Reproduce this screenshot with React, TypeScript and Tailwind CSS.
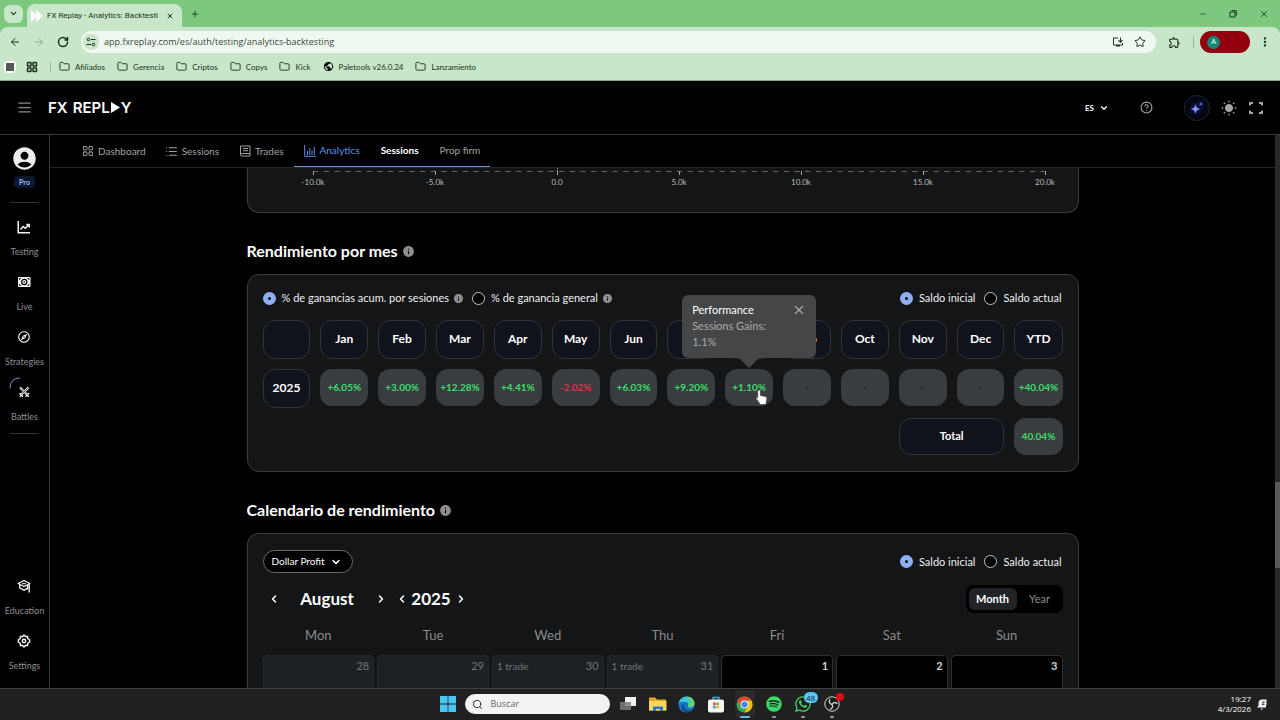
import React from 'react';
import {
  AlignJustify,
  ArrowLeft,
  ArrowRight,
  ChevronDown,
  ChevronLeft,
  ChevronRight,
  CircleHelp,
  Folder,
  LayoutGrid,
  List,
  Minus,
  Plus,
  RotateCw,
  Search,
  Star,
  X,
} from 'lucide-react';
import { FaSpotify, FaWhatsapp } from 'react-icons/fa';
import {
  MdAccountCircle,
  MdInfo,
  MdMoreVert,
  MdOutlineExplore,
  MdOutlineExtension,
  MdOutlineInstallDesktop,
  MdPublic,
} from 'react-icons/md';

const bookmarks = ['Afiliados', 'Gerencia', 'Criptos', 'Copys', 'Kick', 'Paletools v26.0.24', 'Lanzamiento'];

const months = ['Jan', 'Feb', 'Mar', 'Apr', 'May', 'Jun', 'Jul', 'Aug', 'Sep', 'Oct', 'Nov', 'Dec', 'YTD'];

const gains = [
  '+6.05%',
  '+3.00%',
  '+12.28%',
  '+4.41%',
  '-2.02%',
  '+6.03%',
  '+9.20%',
  '+1.10%',
  '-',
  '-',
  '-',
  '-',
  '+40.04%',
];

const axis = ['-10.0k', '-5.0k', '0.0', '5.0k', '10.0k', '15.0k', '20.0k'];

const weekdays = ['Mon', 'Tue', 'Wed', 'Thu', 'Fri', 'Sat', 'Sun'];

const days = [
  { day: 28, trades: '', current: false },
  { day: 29, trades: '', current: false },
  { day: 30, trades: '1 trade', current: false },
  { day: 31, trades: '1 trade', current: false },
  { day: 1, trades: '', current: true },
  { day: 2, trades: '', current: true },
  { day: 3, trades: '', current: true },
];

const gainColor = (value: string) => {
  if (value === '-') return 'text-[#17191a]';
  return value.startsWith('-') ? 'text-[#e0304e]' : 'text-[#3ddc6b]';
};

const BrowserBar = () => (
  <header className="flex-none bg-[#7dc87f] text-[#1c3320] font-['Roboto',sans-serif]">
    <div className="flex h-[27px] items-center pl-1">
      <button aria-label="Buscar pestañas" className="flex h-[18px] w-[19px] items-center justify-center rounded-md bg-[#c8e6c9]">
        <ChevronDown size={9} strokeWidth={3} />
      </button>
      <div className="ml-1 flex h-[23px] w-[155px] items-center gap-1 self-end rounded-t-lg bg-[#c8e6c9] pl-1 pr-1">
        <svg width="12" height="12" viewBox="0 0 12 12" fill="#fff">
          <path d="M0 0l6 6-6 6zM5 0l7 6-7 6z" />
        </svg>
        <span className="flex-1 overflow-hidden whitespace-nowrap text-[8px]">FX Replay - Analytics: Backtesting</span>
        <button aria-label="Cerrar pestaña" className="px-1">
          <X size={8} strokeWidth={3} />
        </button>
      </div>
      <button aria-label="Nueva pestaña" className="ml-2">
        <Plus size={10} strokeWidth={2} />
      </button>
      <div className="ml-auto flex items-center gap-[22px] pr-[11px]">
        <button aria-label="Minimizar">
          <Minus size={8} strokeWidth={2} />
        </button>
        <button aria-label="Restaurar">
          <svg width="8" height="8" viewBox="0 0 8 8" fill="none" stroke="currentColor">
            <path d="M1 2h5v5H1zM2.500.700h4.800v4.800" />
          </svg>
        </button>
        <button aria-label="Cerrar">
          <X size={10} strokeWidth={2} />
        </button>
      </div>
    </div>
    <div className="rounded-t-lg border-b border-[#8aa88c] bg-[#c8e6c9]">
      <div className="flex h-[30px] items-center pl-[9px] pr-2">
        <button aria-label="Atrás">
          <ArrowLeft size={12} strokeWidth={2} />
        </button>
        <button aria-label="Adelante" className="ml-3 text-[#86a888]">
          <ArrowRight size={12} strokeWidth={2} />
        </button>
        <button aria-label="Recargar" className="ml-3">
          <RotateCw size={12} strokeWidth={3} />
        </button>
        <div className="ml-3 flex h-[22px] flex-1 items-center rounded-full bg-[#eff8f0] pl-[2px] pr-[10px]">
          <span className="flex h-4 w-4 items-center justify-center rounded-full bg-[#c8e6c9]">
            <svg width="10" height="10" viewBox="0 0 10 10" fill="none" stroke="currentColor">
              <circle cx="2.500" cy="2.500" r="1.300" />
              <path d="M5 2.500h4.500M.500 7.500H5" />
              <circle cx="7.500" cy="7.500" r="1.300" />
            </svg>
          </span>
          <input
            aria-label="Dirección"
            className="ml-[5px] flex-1 bg-transparent font-['Open_Sans',sans-serif] text-[9px] text-[#38483a] outline-none"
            defaultValue="app.fxreplay.com/es/auth/testing/analytics-backtesting"
          />
          <MdOutlineInstallDesktop size={12} />
          <Star size={12} strokeWidth={2} className="ml-[10px]" />
        </div>
        <button aria-label="Extensiones" className="ml-3">
          <MdOutlineExtension size={13} />
        </button>
        <span className="ml-3 h-3 w-px bg-[#8fbf92]" />
        <button className="ml-[6px] flex h-[22px] w-[50px] items-center rounded-full bg-[#94000f] pl-[7px]">
          <span className="flex h-[13px] w-[13px] items-center justify-center rounded-full bg-[#128a76] text-[8px] text-white">A</span>
        </button>
        <button aria-label="Menú" className="ml-2">
          <MdMoreVert size={14} />
        </button>
      </div>
      <nav className="flex h-[23px] items-center gap-3 pb-1 pl-1 font-['Lato',sans-serif] text-[8px]">
        <span className="flex h-3 w-3 items-center justify-center rounded-sm bg-white">
          <span className="h-2 w-2 bg-[#55585b]" />
        </span>
        <LayoutGrid size={12} strokeWidth={3} className="-ml-[2px]" />
        <span className="h-[10px] w-px bg-[#8fbf92]" />
        {bookmarks.map((name) => (
          <a key={name} href="#" className="flex items-center gap-[5px] whitespace-nowrap first-of-type:-ml-1">
            {name.startsWith('Paletools') ? (
              <MdPublic size={11} className="text-black" />
            ) : (
              <Folder size={11} strokeWidth={2} />
            )}
            {name}
          </a>
        ))}
      </nav>
    </div>
  </header>
);

const AppHeader = () => (
  <header className="flex h-[54px] flex-none items-center border-b border-[#3a3a3a] pl-[17px] pr-4">
    <button aria-label="Abrir menú" className="text-[#8b8b8b]">
      <AlignJustify size={15} strokeWidth={2} />
    </button>
    <a
      href="#"
      aria-label="FX Replay"
      className="ml-4 flex items-center gap-px font-['Inter',sans-serif] text-[15px] font-semibold leading-4 text-white"
    >
      <span className="mr-1">FX</span>
      <span>REPL</span>
      <svg width="9" height="11" viewBox="0 0 9 11" fill="currentColor">
        <path d="M0 0l9 5.500L0 11z" />
      </svg>
      <span>Y</span>
    </a>
    <div className="ml-auto flex items-center text-[#a5a5a5]">
      <button className="flex items-center gap-[5px] text-[8px] font-bold text-white">
        ES
        <ChevronDown size={10} strokeWidth={3} />
      </button>
      <button aria-label="Ayuda" className="ml-[31px]">
        <CircleHelp size={13} strokeWidth={2} />
      </button>
      <button
        aria-label="Asistente"
        className="ml-[31px] flex h-[26px] w-[26px] items-center justify-center rounded-full border border-[#22252f] bg-[#05060f]"
      >
        <svg width="16" height="16" viewBox="0 0 16 16" className="drop-shadow-[0_0_3px_#2b46ff]">
          <path d="M6.500 4c.8 3.600 1.600 4.300 5 5-3.400.8-4.200 1.500-5 5-.8-3.500-1.600-4.200-5-5 3.400-.7 4.200-1.400 5-5z" fill="#7f9dff" />
          <path d="M12 1.500c.4 1.800.8 2.200 2.500 2.500-1.700.4-2.100.8-2.500 2.500-.4-1.700-.8-2.100-2.500-2.500 1.700-.3 2.100-.7 2.500-2.500z" fill="#4f62dc" />
        </svg>
      </button>
      <button aria-label="Tema" className="ml-[11px]">
        <svg width="16" height="16" viewBox="0 0 16 16" fill="currentColor" stroke="currentColor" strokeLinecap="round">
          <circle cx="8" cy="8" r="3.600" />
          <path
            strokeWidth="1.400"
            d="M8 1.200v.6M8 14.200v.6M1.200 8h.6M14.200 8h.6M3.200 3.200l.4.4M12.400 12.400l.4.4M3.200 12.800l.4-.4M12.400 3.600l.4-.4"
          />
        </svg>
      </button>
      <button aria-label="Pantalla completa" className="ml-[11px]">
        <svg width="16" height="16" viewBox="0 0 16 16" fill="none" stroke="currentColor" strokeWidth="2">
          <path d="M2 5.500V3h3M11 3h3v2.500M14 10.500V13h-3M5 13H2v-2.500" />
        </svg>
      </button>
    </div>
  </header>
);

const TestingIcon = () => (
  <svg width="14" height="14" viewBox="0 0 14 14" fill="none" stroke="currentColor" strokeWidth="1.500">
    <path d="M1.200 1v11.800H13" />
    <path d="M3.500 9.500l2.700-3 2 1.800L12 4.700M9.200 4.500h3v3" />
  </svg>
);

const LiveIcon = () => (
  <svg width="14" height="14" viewBox="0 0 14 14">
    <rect x="1" y="2" width="12.500" height="10" rx="1" fill="currentColor" />
    <path d="M2.500 5v-1.400h1.600M10.400 3.600H12V5M12 9v1.400h-1.600M4.100 10.400H2.500V9" fill="none" stroke="#000" strokeWidth=".8" />
    <circle cx="7.250" cy="7" r="2.600" fill="none" stroke="#000" strokeWidth="1.200" />
    <circle cx="7.250" cy="7" r=".8" fill="#000" />
  </svg>
);

const BattlesIcon = () => (
  <svg width="14" height="14" viewBox="0 0 14 14" fill="none" stroke="currentColor">
    <path strokeWidth="2.200" d="M3 2.500l7.500 7.500M11.500 2.500L4 10" />
    <path strokeWidth="1.400" d="M2.500 8.200L6 11.700M12 8.200L8.500 11.700M2.700 11.700l1.500-1.500M11.800 11.700L10.200 10.200" />
    <path stroke="#000" strokeWidth=".6" d="M3.500 3l6.500 6.500M11 3L4.500 9.500" />
  </svg>
);

const EducationIcon = () => (
  <svg width="14" height="14" viewBox="0 0 14 14" fill="none" stroke="currentColor" strokeWidth="1.400" strokeLinejoin="round">
    <path d="M7 1.500l5.800 3L7 7.500l-5.800-3z" />
    <path d="M2.700 5.500V9L7 11.200l3.500-1.700V6M12.200 5v8.500" />
    <path d="M5 4.700h4" strokeWidth="1" />
  </svg>
);

const SettingsIcon = () => (
  <svg width="14" height="14" viewBox="0 0 14 14" fill="none" stroke="currentColor" strokeWidth="1.500" strokeLinejoin="round">
    <path d="M7 1.100l1.400 1.500 2.100-.2.200 2.100L12.600 6v2l-1.900 1.500-.2 2.100-2.100-.2L7 12.900l-1.400-1.500-2.100.2-.2-2.100L1.400 8V6l1.900-1.500.2-2.100 2.100.2z" />
    <circle cx="7" cy="7" r="1.700" />
  </svg>
);

interface SideItemProps {
  label: string;
  icon: React.ReactNode;
  loading?: boolean;
}

const SideItem = ({ label, icon, loading }: SideItemProps) => (
  <li className="h-[38px]">
    <a href="#" className="flex flex-col items-center gap-3 text-[9px] leading-3 text-[#8f8f8f]">
      <span className="relative text-[#f2f2f2]">
        {icon}
        {loading && (
          <svg width="12" height="12" viewBox="0 0 12 12" fill="none" className="absolute -left-2 -top-2">
            <path d="M1 11.500C1 5 4.500 1 11 1" stroke="#7f92dc" strokeWidth="1" />
          </svg>
        )}
      </span>
      {label}
    </a>
  </li>
);

const Sidebar = () => (
  <aside className="flex w-[50px] flex-none flex-col items-center border-r border-[#3a3a3a] pb-4 pt-[10px]">
    <MdAccountCircle size={27} className="flex-none text-[#ececec]" />
    <span className="mt-1 rounded-sm bg-[#0b1830] px-[5px] text-[7px] font-bold leading-3 text-[#9dbcfb]">Pro</span>
    <hr className="mt-[14px] w-[29px] border-[#333]" />
    <ul className="mt-[17px] flex flex-col gap-[17px]">
      <SideItem label="Testing" icon={<TestingIcon />} />
      <SideItem label="Live" icon={<LiveIcon />} />
      <SideItem label="Strategies" icon={<MdOutlineExplore size={14} />} />
      <SideItem label="Battles" icon={<BattlesIcon />} loading />
    </ul>
    <hr className="mt-[10px] w-[29px] border-[#333]" />
    <ul className="mt-auto flex flex-col gap-[17px]">
      <SideItem label="Education" icon={<EducationIcon />} />
      <SideItem label="Settings" icon={<SettingsIcon />} />
    </ul>
  </aside>
);

const Tabs = () => (
  <nav className="flex h-[33px] flex-none border-b border-[#262626] pl-8 text-[10px] text-[#a2a2a2]">
    <a href="#" className="flex items-center gap-1">
      <LayoutGrid size={12} strokeWidth={2} />
      Dashboard
    </a>
    <a href="#" className="ml-[19px] flex items-center gap-1">
      <List size={13} strokeWidth={2} />
      Sessions
    </a>
    <a href="#" className="ml-5 flex items-center gap-1">
      <svg width="12" height="12" viewBox="0 0 12 12" fill="none" stroke="currentColor">
        <path d="M1.500 1H11v10H3a1.500 1.500 0 01-1.500-1.500zM1.500 9.500A1.500 1.500 0 013 8.500h8M4 3.500h5M4 5.700h5" />
      </svg>
      Trades
    </a>
    <div className="ml-[10px] flex items-stretch gap-[21px] border-b border-[#6d93e8] px-[10px]">
      <a href="#" className="flex items-center gap-1 text-[#5f8fee]">
        <svg width="12" height="12" viewBox="0 0 12 12" fill="none" stroke="currentColor">
          <path d="M.700 0v11.300H12M3.500 10V6M5.800 10V3M8 10V5.500M10.300 10V2" />
        </svg>
        Analytics
      </a>
      <a href="#" className="flex items-center font-bold text-white">
        Sessions
      </a>
      <a href="#" className="flex items-center">
        Prop firm
      </a>
    </div>
  </nav>
);

const SectionTitle = ({ children }: { children: React.ReactNode }) => (
  <h2 className="mb-[11px] mt-[26px] flex h-6 items-center gap-1 text-[16px] font-bold text-white">
    {children}
    <MdInfo size={13} className="text-[#8e8e8e]" />
  </h2>
);

interface RadioProps {
  name: string;
  label: string;
  checked?: boolean;
  info?: boolean;
}

const Radio = ({ name, label, checked, info }: RadioProps) => (
  <label className="flex items-center text-[11px] leading-4 text-[#f0f0f0]">
    <input
      type="radio"
      name={name}
      defaultChecked={checked}
      className="mr-[6px] h-[13px] w-[13px] appearance-none rounded-full border border-[#c4c4c4] bg-black checked:border-[5px] checked:border-[#8fb0f7]"
    />
    {label}
    {info && <MdInfo size={11} className="ml-1 text-[#8e8e8e]" />}
  </label>
);

const BalanceRadios = ({ name }: { name: string }) => (
  <div className="flex items-center gap-[9px] pr-px">
    <Radio name={name} label="Saldo inicial" checked />
    <Radio name={name} label="Saldo actual" />
  </div>
);

const DistributionChart = () => (
  <section className="rounded-b-xl border border-t-0 border-[#3a3b3c] bg-[#141516]">
    <svg viewBox="0 0 830 44" className="block w-full">
      <path d="M65 3.500H797" stroke="#666" strokeDasharray="5.300 5.400" />
      <path d="M309.500 0v3" stroke="#9a9a9a" strokeDasharray="1 1" />
      {axis.map((label, i) => (
        <g key={label}>
          <path d={`M${65.5 + i * 122} 3v4`} stroke="#a5a5a5" />
          <text x={65 + i * 122} y="17" textAnchor="middle" fontSize="8" fill="#bcbcbc">
            {label}
          </text>
        </g>
      ))}
    </svg>
  </section>
);

const GainTooltip = () => (
  <div
    role="tooltip"
    className="absolute bottom-full left-1/2 z-10 mb-[11px] h-[63px] w-[134px] -translate-x-1/2 rounded-md bg-[#454648] px-[10px] pt-[7px] text-left text-[11px] font-normal leading-4 text-[#a9aaab]"
  >
    <div className="flex items-center justify-between text-white">
      Performance
      <button aria-label="Cerrar" className="text-[#a9aaab]">
        <X size={14} strokeWidth={2} />
      </button>
    </div>
    <p>Sessions Gains:</p>
    <p>1.1%</p>
    <svg width="20" height="10" viewBox="0 0 20 10" className="absolute left-1/2 top-full -translate-x-1/2" fill="#454648">
      <path d="M0 0h20L10 10z" />
    </svg>
  </div>
);

const HandCursor = () => (
  <svg width="13" height="17" viewBox="0 0 13 17" className="absolute left-[30px] top-5 z-10">
    <path
      d="M4 1c.8 0 1.300.6 1.300 1.300V6.500l5 1c1 .3 1.500.9 1.500 1.900 0 2.600-.8 3.200-.8 6.100H5C4.600 13.500 2.600 12 1.200 9.700c-.5-.9.6-1.600 1.500-.6V2.300C2.700 1.600 3.200 1 4 1z"
      fill="#fff"
      stroke="#333"
      strokeWidth=".6"
    />
  </svg>
);

const MonthlyTable = () => (
  <section className="rounded-xl border border-[#3a3b3c] bg-[#141516] px-[15px] pb-[6px] pt-[15px]">
    <div className="flex items-center justify-between">
      <div className="flex items-center gap-2">
        <Radio name="gain" label="% de ganancias acum. por sesiones" checked info />
        <Radio name="gain" label="% de ganancia general" info />
      </div>
      <BalanceRadios name="monthly-balance" />
    </div>
    <div className="-mx-[10px] mt-1">
      <table className="w-full table-fixed border-separate border-spacing-[10px] text-center text-[12px] font-bold text-white">
        <thead>
          <tr>
            <th aria-label="Año" className="h-[39px] rounded-xl border border-[#303338] bg-[#11131c]" />
            {months.map((month) => (
              <th key={month} className="h-[39px] rounded-xl border border-[#303338] bg-[#11131c] p-0 pb-[2px]">
                {month}
              </th>
            ))}
          </tr>
        </thead>
        <tbody>
          <tr>
            <th className="h-[39px] rounded-xl border border-[#303338] bg-[#11131c] p-0 pb-[2px]">2025</th>
            {gains.map((value, i) => (
              <td key={months[i]} className="p-0 align-top text-[10px]">
                <div className={`relative flex h-[37px] items-center justify-center rounded-xl bg-[#3a3d3f] ${gainColor(value)}`}>
                  {value}
                  {months[i] === 'Aug' && (
                    <>
                      <GainTooltip />
                      <HandCursor />
                    </>
                  )}
                </div>
              </td>
            ))}
          </tr>
          <tr>
            <td colSpan={11} />
            <th colSpan={2} className="h-[37px] rounded-xl border border-[#303338] bg-[#11131c] p-0 text-[11px]">
              Total
            </th>
            <td className="h-[37px] rounded-xl bg-[#3a3d3f] p-0 text-[10px] text-[#3ddc6b]">40.04%</td>
          </tr>
        </tbody>
      </table>
    </div>
  </section>
);

const PerformanceCalendar = () => (
  <section className="rounded-t-xl border border-b-0 border-[#3a3b3c] bg-[#141516] px-[15px] pt-4 text-white">
    <div className="flex items-center justify-between">
      <label className="relative flex items-center">
        <select
          aria-label="Métrica"
          className="h-[23px] w-[90px] appearance-none rounded-full border border-[#6a6a6a] bg-black pl-2 text-[10px] outline-none"
        >
          <option>Dollar Profit</option>
        </select>
        <ChevronDown size={12} strokeWidth={3} className="pointer-events-none absolute right-[11px]" />
      </label>
      <BalanceRadios name="calendar-balance" />
    </div>
    <div className="mt-3 flex h-7 items-center">
      <button aria-label="Mes anterior" className="ml-[5px]">
        <ChevronLeft size={12} strokeWidth={3} />
      </button>
      <span className="w-[95px] text-center text-[17px] font-bold">August</span>
      <button aria-label="Mes siguiente">
        <ChevronRight size={12} strokeWidth={3} />
      </button>
      <button aria-label="Año anterior" className="ml-[9px]">
        <ChevronLeft size={12} strokeWidth={3} />
      </button>
      <span className="w-[47px] text-center text-[17px] font-bold">2025</span>
      <button aria-label="Año siguiente">
        <ChevronRight size={12} strokeWidth={3} />
      </button>
      <div className="ml-auto flex h-7 w-[97px] rounded-lg bg-black p-[3px] pr-0 text-[11px]">
        <button className="w-12 rounded-md bg-[#222327] font-bold">Month</button>
        <button className="flex-1 text-[#8e8e8e]">Year</button>
      </div>
    </div>
    <div className="-mx-[3px]">
      <table className="w-full table-fixed border-separate border-spacing-x-[3px]">
        <thead>
          <tr>
            {weekdays.map((name) => (
              <th key={name} className="h-[42px] p-0 pt-[3px] text-[13px] font-normal text-[#8a8b8c]">
                {name}
              </th>
            ))}
          </tr>
        </thead>
        <tbody>
          <tr>
            {days.map(({ day, trades, current }) => (
              <td
                key={day}
                className={
                  current
                    ? 'h-20 rounded-sm border border-[#2e3133] bg-black px-1 py-[2px] align-top text-[11px] font-bold text-[#d0d0d0]'
                    : 'h-20 rounded-sm border border-[#25282a] bg-[#1e2123] px-1 py-[2px] align-top text-[11px] text-[#717476]'
                }
              >
                <div className="flex justify-between leading-4">
                  <span className="text-[10px]">{trades}</span>
                  <span>{day}</span>
                </div>
              </td>
            ))}
          </tr>
        </tbody>
      </table>
    </div>
  </section>
);

const ScrollBar = () => (
  <div className="flex w-[5px] flex-none flex-col bg-[#2a2a2a]">
    <div className="flex-[347]" />
    <div className="flex-[86] bg-[#5a5a5a]" />
    <div className="flex-[120]" />
  </div>
);

const TaskbarApps = () => (
  <div className="flex items-center gap-[9px]">
    <button aria-label="Inicio">
      <svg width="16" height="16" viewBox="0 0 16 16" fill="#4cc5f5">
        <path d="M0 0h7.600v7.600H0zM8.400 0H16v7.600H8.400zM0 8.400h7.600V16H0zM8.400 8.400H16V16H8.400z" />
      </svg>
    </button>
    <label className="flex h-5 w-[145px] items-center gap-2 rounded-full bg-[#f3f3f3] pl-[7px] text-[#222]">
      <Search size={11} strokeWidth={2} />
      <input aria-label="Buscar" placeholder="Buscar" className="w-24 bg-transparent text-[9px] outline-none placeholder:text-[#666]" />
    </label>
    <div className="flex items-center gap-[9px]">
      <button aria-label="Vista de tareas" className="flex w-5 justify-center">
        <svg width="17" height="16" viewBox="0 0 17 16">
          <path d="M5 1h11v9H5z" fill="#f0f0f0" />
          <path d="M0 6h11v8H0z" fill="#7d7d7d" opacity=".85" />
        </svg>
      </button>
      <button aria-label="Explorador" className="flex w-5 justify-center">
        <svg width="18" height="16" viewBox="0 0 18 16">
          <path d="M0 1.500h6l2 2h9v11H0z" fill="#e5a923" />
          <path d="M0 5h17.500v9.500H0z" fill="#fbd45b" />
          <path d="M4 15v-3.500a1 1 0 011-1h8a1 1 0 011 1V15h-3v-2H7v2z" fill="#1f78c8" />
        </svg>
      </button>
      <button aria-label="Edge" className="flex w-5 justify-center">
        <svg width="17" height="17" viewBox="0 0 17 17">
          <circle cx="8.500" cy="8.500" r="8" fill="#1673c5" />
          <path d="M.600 8C1 3.500 4.500.500 8.600.500c4.400 0 7.900 3.200 7.900 6.800 0 2.700-2 4-4.200 4-1.800 0-2.700-.7-2.300-1.400.6-1 .6-3.900-2.900-4.200C4 5.500 1.500 6.400.600 8z" fill="#3ec6d4" />
          <path d="M9 .500c4.400.2 7.500 3.300 7.500 6.800 0 2.700-2 4-4.200 4-1.800 0-2.700-.7-2.300-1.400 1-1.700 3.500-4.400-1-9.400z" fill="#62d66b" />
          <path d="M6.300 7.500c-1.500 2.600.4 6.500 4.200 6.700 1.800.1 3-.4 3.900-.9-2.600 3.600-6 3.500-8.400 2.200-3-2-2.700-6.500.3-8z" fill="#0c4a8f" />
        </svg>
      </button>
      <button aria-label="Tienda" className="flex w-5 justify-center">
        <svg width="16" height="17" viewBox="0 0 16 17">
          <path d="M5 4V1.500h6V4" fill="none" stroke="#3aa7ea" strokeWidth="1.300" />
          <rect y="3.500" width="16" height="13" rx="2" fill="#f4f4f4" />
          <path d="M5 6.500h2.700v2.700H5z" fill="#e8503a" />
          <path d="M8.300 6.500H11v2.700H8.300z" fill="#7ab93c" />
          <path d="M5 9.800h2.700v2.700H5z" fill="#36a3e8" />
          <path d="M8.300 9.800H11v2.700H8.300z" fill="#f2b52c" />
        </svg>
      </button>
      <button aria-label="Chrome" className="relative flex h-7 w-5 items-center justify-center rounded-sm bg-[#2b2b2b]">
        <svg width="17" height="17" viewBox="0 0 17 17">
          <circle cx="8.500" cy="8.500" r="8" fill="#34a853" />
          <path d="M1.600 4.500A8 8 0 0115.400 4.500H8.500L5 10.500z" fill="#ea4335" />
          <path d="M15.400 4.500A8 8 0 018.500 16.500L12 10.500 11.500 4.500z" fill="#fbbc05" />
          <circle cx="8.500" cy="8.500" r="4" fill="#fff" />
          <circle cx="8.500" cy="8.500" r="3.100" fill="#4285f4" />
        </svg>
        <span className="absolute bottom-0 h-[2px] w-[10px] rounded-full bg-[#5bb8ee]" />
      </button>
      <button aria-label="Spotify" className="relative flex h-7 w-5 items-center justify-center">
        <FaSpotify size={16} color="#3bd967" />
        <span className="absolute bottom-0 h-[2px] w-1 rounded-full bg-[#9a9a9a]" />
      </button>
      <button aria-label="WhatsApp" className="relative flex h-7 w-5 items-center justify-center">
        <FaWhatsapp size={18} color="#3fd46b" />
        <span className="absolute -right-[5px] top-[2px] flex h-[11px] w-[14px] items-center justify-center rounded-full bg-[#5cc3f2] text-[8px] text-[#0b2a3a]">
          48
        </span>
        <span className="absolute bottom-0 h-[2px] w-1 rounded-full bg-[#9a9a9a]" />
      </button>
      <button aria-label="OBS" className="relative flex h-7 w-5 items-center justify-center">
        <svg width="16" height="16" viewBox="0 0 16 16" fill="none" stroke="#d8d8d8">
          <circle cx="8" cy="8" r="7.200" fill="#1b1b1b" />
          <path d="M8 8.500C5.500 8 4.500 5.500 6 3M8 8.500c1-2.200 3.800-2.800 5.300-.6M8 8.500c1.400 2 .3 4.400-2.300 4.700" strokeWidth="1.300" />
        </svg>
        <span className="absolute -right-[2px] top-[3px] h-2 w-2 rounded-full bg-[#e00b16]" />
        <span className="absolute bottom-0 h-[2px] w-1 rounded-full bg-[#9a9a9a]" />
      </button>
    </div>
  </div>
);

const Taskbar = () => (
  <footer className="grid h-8 flex-none grid-cols-[1fr_auto_1fr] items-center border-t border-[#404040] bg-[#202020] pb-px pl-px font-['Open_Sans',sans-serif] text-white">
    <span />
    <TaskbarApps />
    <div className="flex items-center justify-end gap-[6px] pr-[13px]">
      <time className="text-right text-[8px] leading-[10px]">
        19:27
        <br />
        4/3/2026
      </time>
      <svg width="10" height="11" viewBox="0 0 10 11">
        <path d="M0 8.500l1.500-1.700V4C1.500 2 3 .600 5 .600H9.500V5L9 6.800v1.700zM3.500 9.500h2.500L4.800 11z" fill="#f2f2f2" />
        <path d="M5 3h2.500L5 5.500h2.500" fill="none" stroke="#202020" strokeWidth=".8" />
      </svg>
    </div>
  </footer>
);

const App = () => {
  return (
    <div className="flex h-screen flex-col overflow-hidden bg-black font-['Lato',sans-serif]">
      <BrowserBar />
      <AppHeader />
      <div className="flex min-h-0 flex-1">
        <Sidebar />
        <div className="flex min-w-0 flex-1 flex-col">
          <Tabs />
          <main className="min-h-0 flex-1 overflow-hidden">
            <div className="mx-auto max-w-[832px]">
              <DistributionChart />
              <SectionTitle>Rendimiento por mes</SectionTitle>
              <MonthlyTable />
              <SectionTitle>Calendario de rendimiento</SectionTitle>
              <PerformanceCalendar />
            </div>
          </main>
        </div>
        <ScrollBar />
      </div>
      <Taskbar />
    </div>
  );
};

export default App;
